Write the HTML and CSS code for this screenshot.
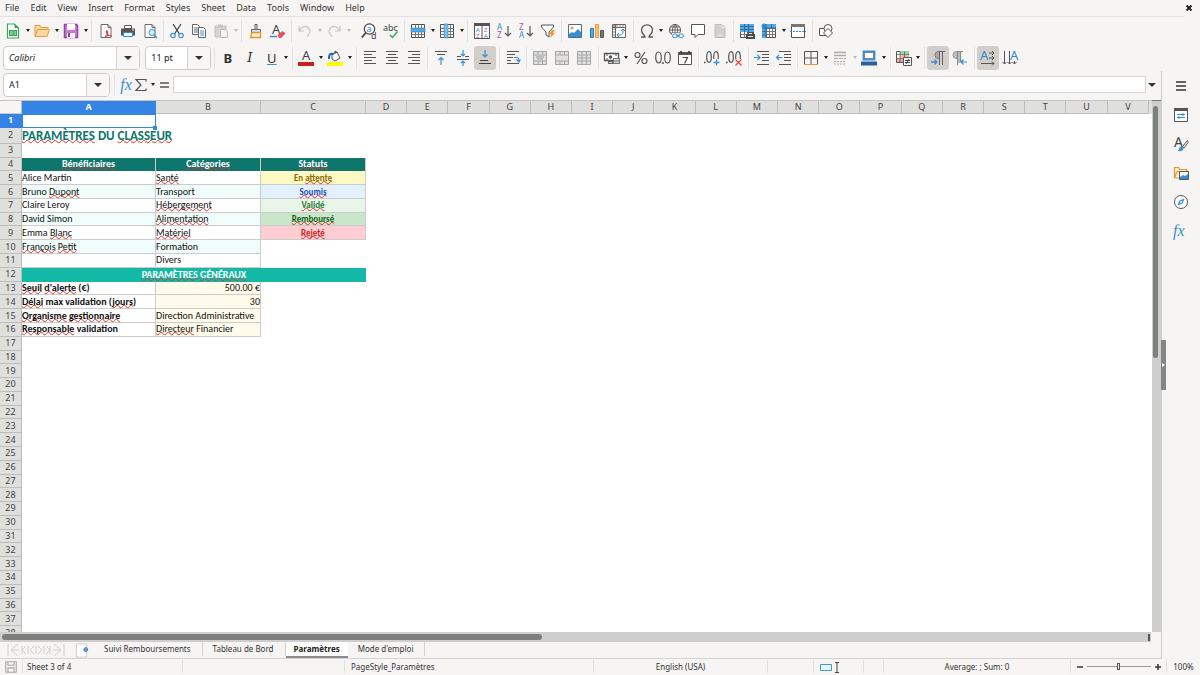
FILE: index.html
```html
<!DOCTYPE html>
<html lang="en">
<head>
<meta charset="utf-8">
<title>Paramètres</title>
<link rel="stylesheet" href="styles.css">
</head>
<body>
<svg class="defs" aria-hidden="true">
  <symbol id="page" viewBox="0 0 16 16"><path d="M3 1.5h7l3 3v10H3zM10 1.5v3h3" fill="#fafafa" stroke="#6b6b6b"/></symbol>
  <symbol id="grid" viewBox="0 0 16 16"><path d="M1.5 1.5h13v13h-13z" fill="#fff" stroke="#4d4d4d"/><path d="M1.5 5.5h13M1.5 8.5h13M1.5 11.5h13M5.5 1.5v13M8.5 1.5v13M11.5 1.5v13" stroke="#777" fill="none"/></symbol>
  <symbol id="merge" viewBox="0 0 16 16"><path d="M1.5 1.5h13v13h-13z" fill="#e0e0e0" stroke="#a6a6a6"/><path d="M1.5 5h13M1.5 11h13M6 1.5v3M10.5 1.5v3M6 11v3M10.5 11v3" stroke="#a6a6a6"/></symbol>
</svg>
<div class="app">
  <nav class="menubar">
    <button>File</button><button>Edit</button><button>View</button><button>Insert</button><button>Format</button><button>Styles</button><button>Sheet</button><button>Data</button><button>Tools</button><button>Window</button><button>Help</button>
    <button class="close" aria-label="Close document"><svg viewBox="0 0 8 8"><path d="M1.5 1.5l5 5M6.5 1.5l-5 5" stroke="#222" stroke-width="2"/></svg></button>
  </nav>

  <div class="toolbars">
  <div class="toolbar standard">
    <div class="group">
      <button aria-label="New"><svg viewBox="0 0 16 16"><path d="M2.5 1h7l4 4v10h-11z" fill="#fff" stroke="#38a458" stroke-width="1.2"/><path d="M9.5 1v4h4z" fill="#38a458"/><path d="M4 7h8v6H4z" fill="#38a458"/><path d="M5 9h3M9 9h2M5 11h3M9 11h2" stroke="#c9f0d3"/></svg></button><button class="drop" aria-label="New menu"></button>
      <button aria-label="Open"><svg viewBox="0 0 16 16"><path d="M1 13.5V2.5h5l1 2h7v2M1 13.5L3.5 6.5h12L13 13.5z" fill="#fbd9a0" stroke="#e8993c"/></svg></button><button class="drop" aria-label="Open menu"></button>
      <button aria-label="Save"><svg viewBox="0 0 16 16"><path d="M1.5 1.5h12l1 1v12h-13z" fill="#c77bd4" stroke="#9b3fae" stroke-width="1.5"/><path d="M4 1h8v6H4z" fill="#fff"/><path d="M4 10h8v5H4z" fill="#fafafa"/><path d="M5 10h2v4H5z" fill="#8d3a9e"/></svg></button><button class="drop" aria-label="Save menu"></button>
    </div><i class="sep"></i>
    <div class="group">
      <button aria-label="Export as PDF"><svg viewBox="0 0 16 16"><use href="#page"/><path d="M7 14c3-2 3-5 2-6s-1 3 1 4 4 1 4 1M7.500 14c1-2 4-2 6-1" fill="none" stroke="#e04050" stroke-width="1.2"/></svg></button>
      <button aria-label="Print"><svg viewBox="0 0 16 16"><path d="M4.500 2.500h7v3h-7z" fill="#fff" stroke="#555"/><path d="M1 5.500h14v7H1z" fill="#555"/><path d="M3.500 9.500h9v4h-9z" fill="#fff" stroke="#2f86d0"/><circle cx="13" cy="7" r=".8" fill="#fff"/></svg></button>
      <button aria-label="Print preview"><svg viewBox="0 0 16 16"><use href="#page"/><circle cx="10" cy="9.5" r="3" fill="#d9eefb" stroke="#4193d0"/><path d="M12 12l3 3" stroke="#4193d0" stroke-width="1.5"/></svg></button>
    </div><i class="sep"></i>
    <div class="group">
      <button aria-label="Cut"><svg viewBox="0 0 16 16"><path d="M4 1l6.500 10M12 1L5.500 11" stroke="#444" stroke-width="1.3"/><circle cx="4" cy="12.500" r="2.2" fill="none" stroke="#3a8fd4" stroke-width="1.2"/><circle cx="12" cy="12.500" r="2.2" fill="none" stroke="#3a8fd4" stroke-width="1.2"/></svg></button>
      <button aria-label="Copy"><svg viewBox="0 0 16 16"><path d="M1.5 1.5h5l2 2v8h-7z" fill="#fff" stroke="#666"/><path d="M3 5h4M3 7h4M3 9h4" stroke="#666"/><path d="M7.5 4.5h5l2 2v8h-7z" fill="#fff" stroke="#666"/><path d="M9 8h4M9 10h4M9 12h4" stroke="#3a8fd4"/></svg></button>
      <button aria-label="Paste" disabled><svg viewBox="0 0 16 16"><path d="M2 3h11v11H2z" fill="#d5d5d5" stroke="#c0c0c0"/><path d="M5 1.5h5v3H5z" fill="#c4c4c4"/><path d="M7.5 6.5h5l2 2v6h-7z" fill="#f3f3f3" stroke="#bbb"/></svg></button><button class="drop" aria-label="Paste menu" disabled></button>
    </div><i class="sep"></i>
    <div class="group">
      <button aria-label="Clone formatting"><svg viewBox="0 0 16 16"><path d="M7 1.5h2v5H7z" fill="#fff" stroke="#555"/><path d="M3.5 6.5h9v3h-9z" fill="#ddd" stroke="#666"/><path d="M4 9.5h8.500v5H2.500z" fill="#fff0d8" stroke="#e8912d" stroke-width="1.3"/></svg></button>
      <button aria-label="Clear formatting"><svg viewBox="0 0 16 16"><text x="2" y="11" class="g dark" font-size="13">A</text><path d="M0 13.5h7" stroke="#3a8fd4" stroke-width="1.5"/><path d="M7.5 12l5-4 3 2.5-4.500 4.500H9z" fill="#e8505b"/></svg></button>
    </div><i class="sep"></i>
    <div class="group">
      <button aria-label="Undo" disabled><svg viewBox="0 0 16 16"><path d="M2 3v5h5M2.5 7.5c2-4 6-5 8.500-3s3 5-1 9" fill="none" stroke="#c4c4c4" stroke-width="1.2"/></svg></button><button class="drop" aria-label="Undo menu" disabled></button>
      <button aria-label="Redo" disabled><svg viewBox="0 0 16 16"><path d="M14 3v5H9M13.5 7.5c-2-4-6-5-8.500-3s-3 5 1 9" fill="none" stroke="#c4c4c4" stroke-width="1.2"/></svg></button><button class="drop" aria-label="Redo menu" disabled></button>
    </div><i class="sep faint"></i>
    <div class="group">
      <button aria-label="Find and replace"><svg viewBox="0 0 16 16"><circle cx="8.500" cy="6" r="5.2" fill="#fff" stroke="#444" stroke-width="1.2"/><path d="M5 9.500L.8 14.500" stroke="#444" stroke-width="1.8"/><text x="5.500" y="9" class="g blue" font-size="9">a</text><text x="10" y="16" class="g dark" font-size="9">d</text></svg></button>
      <button aria-label="Spelling"><svg viewBox="0 0 16 16"><text x="0" y="8" class="g dark" font-size="9">abc</text><path d="M7 12l2.500 2.500L14.500 8.500" fill="none" stroke="#2fa866" stroke-width="1.5"/></svg></button>
    </div><i class="sep"></i>
    <div class="group">
      <button aria-label="Row"><svg viewBox="0 0 16 16"><use href="#grid"/><path d="M1 5h14v4H1z" fill="#54a9e4" stroke="#2f7fb8" stroke-width=".6"/></svg></button><button class="drop" aria-label="Row menu"></button>
      <button aria-label="Column"><svg viewBox="0 0 16 16"><use href="#grid"/><path d="M5 1h4v14H5z" fill="#7cbfec" stroke="#2f7fb8" stroke-width=".6"/></svg></button><button class="drop" aria-label="Column menu"></button>
    </div><i class="sep"></i>
    <div class="group">
      <button aria-label="Sort"><svg viewBox="0 0 16 16"><path d="M.5 .5h15v15H.5zM8 .5v15" fill="#fff" stroke="#555"/><path d="M0 0h16v3H0z" fill="#555"/><text x="2" y="9" class="g blue" font-size="6">A</text><text x="10" y="9" class="g purple" font-size="6">Z</text><text x="2" y="15" class="g purple" font-size="6">Z</text><text x="10" y="15" class="g blue" font-size="6">A</text></svg></button>
      <button aria-label="Sort ascending"><svg viewBox="0 0 16 16"><text x="1" y="7" class="g blue" font-size="8">A</text><text x="1" y="15" class="g purple" font-size="8">Z</text><path d="M12 3v10M9 10l3 3 3-3" fill="none" stroke="#555" stroke-width="1.2"/></svg></button>
      <button aria-label="Sort descending"><svg viewBox="0 0 16 16"><text x="1" y="7" class="g purple" font-size="8">Z</text><text x="1" y="15" class="g blue" font-size="8">A</text><path d="M12 3v10M9 10l3 3 3-3" fill="none" stroke="#555" stroke-width="1.2"/></svg></button>
      <button aria-label="AutoFilter"><svg viewBox="0 0 16 16"><path d="M1.5 2h12v2L9 9v5l-3-2V9L1.5 4z" fill="#fff" stroke="#555"/><path d="M12 7l-3 4h2l-1 4 5-5h-2l2-3z" fill="#f0953c"/></svg></button>
    </div><i class="sep"></i>
    <div class="group">
      <button aria-label="Image"><svg viewBox="0 0 16 16"><path d="M1.5 1.5h13v13h-13z" fill="#fff" stroke="#4d6f8c"/><circle cx="5" cy="5" r="1.600" fill="#f0a040"/><path d="M2 14v-3l3-2 2 1 4-4 3 3v5z" fill="#3a8fd4"/></svg></button>
      <button aria-label="Chart"><svg viewBox="0 0 16 16"><path d="M1.5 5.5h3v9h-3z" fill="#54a9e4" stroke="#2b7bbd"/><path d="M6.5 1.5h3v13h-3z" fill="#fbc67c" stroke="#e8993c"/><path d="M11.5 7.5h3v7h-3z" fill="#777" stroke="#555"/></svg></button>
      <button aria-label="Pivot table"><svg viewBox="0 0 16 16"><path d="M1.5 1.5h13v13h-13zM1.5 4.500h13M4.500 1.5v13" fill="#fff" stroke="#666"/><path d="M2 3h12M3 2v12" stroke="#888" stroke-dasharray="2 1"/><path d="M6 12h3c2 0 3-1 3-3V6M8 10l-2 2 2 2M10 8l2-2 2 2" fill="none" stroke="#3a8fd4"/></svg></button>
    </div><i class="sep"></i>
    <div class="group">
      <button aria-label="Special character"><svg viewBox="0 0 16 16"><path d="M2 14h4c0-2-3.500-3-3.500-7C2.500 4 5 1.800 8 1.800S13.500 4 13.500 7c0 4-3.500 5-3.500 7h4" fill="none" stroke="#555" stroke-width="1.3"/></svg></button><button class="drop" aria-label="Special character menu"></button>
      <button aria-label="Hyperlink"><svg viewBox="0 0 16 16"><circle cx="7" cy="7" r="5.500" fill="#fff" stroke="#555"/><path d="M1.5 7h11M2.500 4h9M2.500 10h9M7 1.5v11M7 1.5c-3.500 3-3.500 8 0 11M7 1.5c3.500 3 3.500 8 0 11" fill="none" stroke="#555" stroke-width=".9"/><path d="M4 10h12v6H4z" fill="#f6f5f4"/><rect x="4.500" y="11" width="5" height="3.500" rx="1.700" fill="none" stroke="#3a8fd4"/><rect x="10.500" y="11" width="5" height="3.500" rx="1.700" fill="none" stroke="#3a8fd4"/><path d="M8 12.800h4" stroke="#3a8fd4"/></svg></button>
      <button aria-label="Comment"><svg viewBox="0 0 16 16"><path d="M1.5 1.5h13v10H8l-3 3v-3H1.5z" fill="#fff" stroke="#555"/></svg></button>
      <button aria-label="Headers and footers" disabled><svg viewBox="0 0 16 16"><path d="M3 1.5h7l3 3v10H3z" fill="#d0d0d0" stroke="#bdbdbd"/><path d="M10 1.5v3h3M5 12h6" fill="none" stroke="#eee"/></svg></button>
    </div><i class="sep"></i>
    <div class="group">
      <button aria-label="Define print area"><svg viewBox="0 0 16 16"><use href="#grid"/><path d="M1 1h14v8H1z" fill="#54a9e4"/><path d="M1 3.500h14M1 6.500h14M5.500 1v8M9.500 1v8" stroke="#2a5f8c" stroke-width=".8"/><path d="M9 9h5v2h2v5H7v-5h2z" fill="#4d4d4d"/><path d="M10 10h3v1h-3zM9 13h5v1H9z" fill="#cfe8fa"/></svg></button>
      <button aria-label="Freeze rows and columns"><svg viewBox="0 0 16 16"><use href="#grid"/><path d="M1 1h14v4H1zM1 5h4v10H1z" fill="#54a9e4"/><path d="M1 5h14M5 1v14M1 8.500h4M1 12h4M10.500 1v4" stroke="#1f5f96" stroke-width=".8"/><path d="M3 0v6M0 3h6M1 1l4 4M5 1L1 5" stroke="#2680cc" stroke-width=".8"/></svg></button><button class="drop" aria-label="Freeze menu"></button>
      <button aria-label="Split window"><svg viewBox="0 0 16 16"><path d="M1.5 1.5h13v13h-13z" fill="#fff" stroke="#555"/><path d="M1 1h14v3H1z" fill="#777"/><path d="M0 8.500h16" stroke="#3a8fd4" stroke-dasharray="2 1"/></svg></button>
    </div><i class="sep"></i>
    <div class="group">
      <button aria-label="Show draw functions"><svg viewBox="0 0 16 16"><path d="M1.5 5.500h7v7h-7z" fill="#fff" stroke="#555"/><circle cx="10" cy="5.500" r="4" fill="#f8f8f8" stroke="#555"/><path d="M10 5.500l4.500 4.500-4.500 4.500L5.500 10z" fill="#fff" stroke="#555"/></svg></button>
    </div>
  </div>

  <div class="toolbar formatting">
    <div class="combo font"><input value="Calibri" aria-label="Font name"><button aria-label="Font list"></button></div>
    <div class="combo size"><input value="11 pt" aria-label="Font size"><button aria-label="Size list"></button></div><i class="sep"></i>
    <div class="group">
      <button class="glyph bold">B</button><button class="glyph italic">I</button><button class="glyph under">U</button><button class="drop" aria-label="Underline menu"></button>
    </div><i class="sep"></i>
    <div class="group">
      <button aria-label="Font color"><svg viewBox="0 0 16 16"><text x="4" y="10" class="g dark" font-size="13">A</text><path d="M0 12h16v4H0z" fill="#c9211e"/></svg></button><button class="drop" aria-label="Font color menu"></button>
      <button aria-label="Background color"><svg viewBox="0 0 16 16"><path d="M5 4l5-2 3 6-5 3-3-2z" fill="#fff" stroke="#555"/><path d="M2 9c0-5 1-6 5-5" fill="none" stroke="#2268a8" stroke-width="2"/><path d="M8 4V1l3 2" fill="none" stroke="#555"/><path d="M0 12h16v4H0z" fill="#ff0"/></svg></button><button class="drop" aria-label="Background color menu"></button>
    </div><i class="sep"></i>
    <div class="group">
      <button aria-label="Align left"><svg viewBox="0 0 16 16"><path d="M2 1.5h12M2 4.500h8M2 7.500h12M2 10.500h8M2 13.500h12" stroke="#555"/></svg></button>
      <button aria-label="Center horizontally"><svg viewBox="0 0 16 16"><path d="M2 1.5h12M4 4.500h8M2 7.500h12M4 10.500h8M2 13.500h12" stroke="#555"/></svg></button>
      <button aria-label="Align right"><svg viewBox="0 0 16 16"><path d="M2 1.5h12M6 4.500h8M2 7.500h12M6 10.500h8M2 13.500h12" stroke="#555"/></svg></button>
    </div><i class="sep"></i>
    <div class="group">
      <button aria-label="Align top"><svg viewBox="0 0 16 16"><path d="M2 1.5h12M4 4.500h8" stroke="#555"/><path d="M8 15V8M5.500 10L8 7.500l2.500 2.500" fill="none" stroke="#3a8fd4" stroke-width="1.2"/></svg></button>
      <button aria-label="Center vertically"><svg viewBox="0 0 16 16"><path d="M2 6.500h4M10 6.500h4M2 9.500h12" stroke="#555"/><path d="M8 0v6M6 4l2 2 2-2M8 16v-5M6 13l2-2 2 2" fill="none" stroke="#3a8fd4" stroke-width="1.2"/></svg></button>
      <button class="on" aria-label="Align bottom"><svg viewBox="0 0 16 16"><path d="M3 10.500h8M2 13.500h12" stroke="#444"/><path d="M8 0v7M5.500 4.500L8 7l2.500-2.500" fill="none" stroke="#3a8fd4" stroke-width="1.2"/></svg></button>
    </div><i class="sep"></i>
    <div class="group">
      <button aria-label="Wrap text"><svg viewBox="0 0 16 16"><path d="M2 1.5h12M2 4.500h8M2 7.500h6M2 10.500h4M2 13.500h12" stroke="#555"/><path d="M9 7.500h3c1.500 0 2 1 2 4M11.500 9.500l2.500 2.500 1.500-2.500" fill="none" stroke="#3a8fd4" stroke-width="1.2"/></svg></button>
    </div><i class="sep"></i>
    <div class="group">
      <button aria-label="Merge and center" disabled><svg viewBox="0 0 16 16"><use href="#merge"/><path d="M4 7h8M5 9h6" stroke="#999"/></svg></button>
      <button aria-label="Merge cells" disabled><svg viewBox="0 0 16 16"><use href="#merge"/></svg></button>
      <button aria-label="Unmerge cells" disabled><svg viewBox="0 0 16 16"><use href="#merge"/><path d="M6 5v6M10.500 5v6M1.5 8h13" stroke="#a6a6a6"/></svg></button>
    </div><i class="sep"></i>
    <div class="group">
      <button aria-label="Format as currency"><svg viewBox="0 0 16 16"><path d="M.5 3.500h14v7H.5z" fill="#fff" stroke="#555" stroke-width="1.3"/><circle cx="6.500" cy="7" r="1.800" fill="#555"/><path d="M2 5h2M11 5h2M2 9h2" stroke="#555"/><path d="M9 8h7v6H9z" fill="#777"/><path d="M4 11h5v3H4z" fill="#666"/><path d="M10 9.500h5M10 11h5M10 12.500h5M5 12.500h3" stroke="#fff" stroke-width=".7"/></svg></button><button class="drop" aria-label="Currency menu"></button>
      <button aria-label="Format as percent"><svg viewBox="0 0 16 16"><circle cx="4.500" cy="5" r="2.500" fill="none" stroke="#555" stroke-width="1.2"/><circle cx="11.500" cy="11" r="2.500" fill="none" stroke="#555" stroke-width="1.2"/><path d="M12 2L4 14" stroke="#555" stroke-width="1.2"/></svg></button>
      <button aria-label="Format as number"><svg viewBox="0 0 16 16"><ellipse cx="3.500" cy="7.500" rx="2.800" ry="5.500" fill="none" stroke="#555" stroke-width="1.2"/><ellipse cx="12.500" cy="7.500" rx="2.800" ry="5.500" fill="none" stroke="#555" stroke-width="1.2"/><path d="M8 12v2" stroke="#555" stroke-width="1.5" fill="none"/></svg></button>
      <button aria-label="Format as date"><svg viewBox="0 0 16 16"><path d="M1.5 2.500h13v12h-13z" fill="#fff" stroke="#555"/><path d="M1 2h14v3H1z" fill="#555"/><path d="M4 1v2M12 1v2" stroke="#333" stroke-width="1.5"/><path d="M5.500 7.500h5l-3 6" fill="none" stroke="#444" stroke-width="1.2"/></svg></button>
    </div><i class="sep"></i>
    <div class="group">
      <button aria-label="Add decimal place"><svg viewBox="0 0 16 16"><path d="M0 12.500h1.500" stroke="#444" stroke-width="1.5"/><ellipse cx="5" cy="7" rx="2.300" ry="5.300" fill="none" stroke="#555" stroke-width="1.2"/><ellipse cx="12" cy="7" rx="2.300" ry="5.300" fill="none" stroke="#555" stroke-width="1.2"/><path d="M9 9h7v7H9z" fill="#f6f5f4"/><path d="M12.500 9.500v6M9.500 12.500h6" stroke="#3a8fd4" stroke-width="1.3"/></svg></button>
      <button aria-label="Delete decimal place"><svg viewBox="0 0 16 16"><path d="M0 12.500h1.500" stroke="#444" stroke-width="1.5"/><ellipse cx="5" cy="7" rx="2.300" ry="5.300" fill="none" stroke="#555" stroke-width="1.2"/><ellipse cx="12" cy="7" rx="2.300" ry="5.300" fill="none" stroke="#555" stroke-width="1.2"/><path d="M9 9h7v7H9z" fill="#f6f5f4"/><path d="M9.500 9.500l6 6M15.500 9.500l-6 6" stroke="#e04545" stroke-width="1.2"/></svg></button>
    </div><i class="sep"></i>
    <div class="group">
      <button aria-label="Increase indent"><svg viewBox="0 0 16 16"><path d="M3 1.5h12M8 4.500h7M8 7.500h7M8 10.500h7M3 14.500h12" stroke="#555"/><path d="M0 7.500h6M3.500 5L6 7.500 3.500 10" fill="none" stroke="#3a8fd4" stroke-width="1.2"/></svg></button>
      <button aria-label="Decrease indent"><svg viewBox="0 0 16 16"><path d="M3 1.5h12M8 4.500h7M8 7.500h7M8 10.500h7M3 14.500h12" stroke="#555"/><path d="M6.500 7.500h-6M3 5L.5 7.500 3 10" fill="none" stroke="#3a8fd4" stroke-width="1.2"/></svg></button>
    </div><i class="sep"></i>
    <div class="group">
      <button aria-label="Borders"><svg viewBox="0 0 16 16"><path d="M1.5 14.500v-13h13v13M8 1.5v13M1.5 8h13" fill="none" stroke="#555"/><path d="M1 14.500h14" stroke="#f0953c"/></svg></button><button class="drop" aria-label="Borders menu"></button>
      <button aria-label="Border style" disabled><svg viewBox="0 0 16 16"><path d="M2 2.500h12M2 5.500h12" stroke="#aaa" stroke-width="1.5"/><path d="M2 8.500h12" stroke="#aaa" stroke-dasharray="4 1"/><path d="M2 11.500h12M2 14h12" stroke="#aaa" stroke-dasharray="2 1"/></svg></button><button class="drop" aria-label="Border style menu" disabled></button>
      <button aria-label="Border color"><svg viewBox="0 0 16 16"><path d="M2.500 1.5h11v8h-11z" fill="#fff" stroke="#3a8fd4" stroke-width="1.8"/><path d="M3.500 2.500h9v6h-9z" fill="none" stroke="#555" stroke-width=".6"/><path d="M0 11.500h16v4H0z" fill="#2a6099"/></svg></button><button class="drop" aria-label="Border color menu"></button>
    </div><i class="sep"></i>
    <div class="group">
      <button aria-label="Conditional formatting"><svg viewBox="0 0 16 16"><path d="M.5 1.5h12v11H.5z" fill="#fff" stroke="#555"/><path d="M4 1h9v3H4z" fill="#8fd6a0"/><path d="M4 5h9v3H4z" fill="#f6b9a0"/><path d="M1 9h7v3H1z" fill="#f0a0a4"/><path d="M.5 4.500h12M.5 8.500h12M4 1.5v11M8.500 1.5v11" stroke="#555" stroke-width=".7"/><path d="M7.500 7.500h8v8h-8z" fill="#fff" stroke="#555"/><path d="M9 10.500h5M9 12.500h5M13 9l-3 5" stroke="#444"/></svg></button><button class="drop" aria-label="Conditional menu"></button>
    </div><i class="sep"></i>
    <div class="group">
      <button class="on" aria-label="Left-to-right"><svg viewBox="0 0 16 16"><path d="M9.500 15V1.5M12.500 15V1.5M15 1.5H8.500a3.500 3.500 0 000 7h1" fill="none" stroke="#666"/><path d="M9 2h-.5a3 3 0 000 6H9z" fill="#aaa"/><path d="M1 12h6M4.500 9.500L7 12l-2.500 2.500" fill="none" stroke="#3a8fd4" stroke-width="1.3"/></svg></button>
      <button aria-label="Right-to-left"><svg viewBox="0 0 16 16"><path d="M5.500 15V1.5M8.500 12V1.5M11 1.5H4.500a3.500 3.500 0 000 7h1" fill="none" stroke="#888"/><path d="M5 2h-.5a3 3 0 000 6H5zM6 2h2v11H6z" fill="#bbb"/><path d="M15 12H9M11.500 9.500L9 12l2.500 2.500" fill="none" stroke="#3a8fd4" stroke-width="1.2"/></svg></button>
    </div><i class="sep"></i>
    <div class="group">
      <button class="on" aria-label="Text left to right"><svg viewBox="0 0 16 16"><text x="0" y="10" class="g blue" font-size="13">A</text><path d="M9 3h5M9 8h5M1 13.500h13M12 1l2 2-2 2M12 6l2 2-2 2M12 11.500l2 2-2 2" fill="none" stroke="#555"/></svg></button>
      <button aria-label="Text top to bottom"><svg viewBox="0 0 16 16"><text x="8" y="10" class="g blue" font-size="13">A</text><path d="M2.500 1v13M7.500 1v13M12.500 11v3M.5 12l2 2 2-2M5.500 12l2 2 2-2M10.500 12l2 2 2-2" fill="none" stroke="#555"/></svg></button>
    </div>
  </div>
  </div>

  <div class="body">
    <main class="work">
      <div class="formula">
        <div class="combo name"><input value="A1" aria-label="Name box"><button aria-label="Name list"></button></div><i class="sep"></i>
        <button class="fx" aria-label="Function wizard">fx</button>
        <button class="sigma" aria-label="Select function"><svg viewBox="0 0 16 16"><path d="M13 4.500v-2H3l5 5.500-5 5.500h10v-2" fill="none" stroke="#555" stroke-width="1.2"/></svg></button><button class="drop" aria-label="Function menu"></button>
        <button class="equals" aria-label="Formula"><svg viewBox="0 0 16 16"><path d="M4 6h9M4 10h9" stroke="#555" stroke-width="1.600"/></svg></button>
        <input class="line" aria-label="Input line">
        <button class="expand" aria-label="Expand formula bar"></button>
      </div>

      <div class="sheet">
        <div class="cells">
          <table>
            <colgroup><col class="c-num"><col class="c-a"><col class="c-b"><col class="c-b"><col span="19"></colgroup>
            <thead><tr><th></th><th class="sel">A</th><th>B</th><th>C</th><th>D</th><th>E</th><th>F</th><th>G</th><th>H</th><th>I</th><th>J</th><th>K</th><th>L</th><th>M</th><th>N</th><th>O</th><th>P</th><th>Q</th><th>R</th><th>S</th><th>T</th><th>U</th><th>V</th></tr></thead>
            <tbody>
              <tr><th class="sel">1</th><td class="cursor"></td><td colspan="21"></td></tr>
              <tr class="tall"><th>2</th><td class="title" colspan="22"><u>PARAMÈTRES</u> DU <u>CLASSEUR</u></td></tr>
              <tr><th>3</th><td colspan="22"></td></tr>
              <tr class="head"><th>4</th><td><u>Bénéficiaires</u></td><td><u>Catégories</u></td><td><u>Statuts</u></td><td class="none" colspan="19"></td></tr>
              <tr><th>5</th><td class="b">Alice Martin</td><td class="b"><u>Santé</u></td><td class="b st wait">En <u>attente</u></td><td colspan="19"></td></tr>
              <tr><th>6</th><td class="b mint">Bruno <u>Dupont</u></td><td class="b mint">Transport</td><td class="b st sent"><u>Soumis</u></td><td colspan="19"></td></tr>
              <tr><th>7</th><td class="b">Claire Leroy</td><td class="b"><u>Hébergement</u></td><td class="b st valid"><u>Validé</u></td><td colspan="19"></td></tr>
              <tr><th>8</th><td class="b mint">David Simon</td><td class="b mint"><u>Alimentation</u></td><td class="b st paid"><u>Remboursé</u></td><td colspan="19"></td></tr>
              <tr><th>9</th><td class="b">Emma <u>Blanc</u></td><td class="b"><u>Matériel</u></td><td class="b st refused"><u>Rejeté</u></td><td colspan="19"></td></tr>
              <tr><th>10</th><td class="b mint"><u>François</u> <u>Petit</u></td><td class="b mint">Formation</td><td colspan="20"></td></tr>
              <tr><th>11</th><td class="b"></td><td class="b">Divers</td><td colspan="20"></td></tr>
              <tr><th>12</th><td class="band" colspan="3"><u>PARAMÈTRES</u> <u>GÉNÉRAUX</u></td><td colspan="19"></td></tr>
              <tr><th>13</th><td class="b label"><u>Seuil</u> <u>d'alerte</u> (€)</td><td class="b cream num">500.00 €</td><td colspan="20"></td></tr>
              <tr><th>14</th><td class="b label"><u>Délai</u> max validation (<u>jours</u>)</td><td class="b cream num">30</td><td colspan="20"></td></tr>
              <tr><th>15</th><td class="b label"><u>Organisme</u> <u>gestionnaire</u></td><td class="b cream">Direction Administrative</td><td colspan="20"></td></tr>
              <tr><th>16</th><td class="b label"><u>Responsable</u> validation</td><td class="b cream"><u>Directeur</u> Financier</td><td colspan="20"></td></tr>
              <tr><th>17</th><td colspan="22"></td></tr>
              <tr><th>18</th><td colspan="22"></td></tr>
              <tr><th>19</th><td colspan="22"></td></tr>
              <tr><th>20</th><td colspan="22"></td></tr>
              <tr><th>21</th><td colspan="22"></td></tr>
              <tr><th>22</th><td colspan="22"></td></tr>
              <tr><th>23</th><td colspan="22"></td></tr>
              <tr><th>24</th><td colspan="22"></td></tr>
              <tr><th>25</th><td colspan="22"></td></tr>
              <tr><th>26</th><td colspan="22"></td></tr>
              <tr><th>27</th><td colspan="22"></td></tr>
              <tr><th>28</th><td colspan="22"></td></tr>
              <tr><th>29</th><td colspan="22"></td></tr>
              <tr><th>30</th><td colspan="22"></td></tr>
              <tr><th>31</th><td colspan="22"></td></tr>
              <tr><th>32</th><td colspan="22"></td></tr>
              <tr><th>33</th><td colspan="22"></td></tr>
              <tr><th>34</th><td colspan="22"></td></tr>
              <tr><th>35</th><td colspan="22"></td></tr>
              <tr><th>36</th><td colspan="22"></td></tr>
              <tr><th>37</th><td colspan="22"></td></tr>
              <tr><th>38</th><td colspan="22"></td></tr>
            </tbody>
          </table>
        </div>
        <div class="vscroll"><div class="thumb"></div></div>
      </div>
      <div class="hscroll"><div class="thumb"></div><i class="split"></i></div>

      <div class="tabs">
        <button class="nav" aria-label="Scroll tabs"><svg viewBox="0 0 60 14"><path d="M2 1v12M12 1L5 7l7 6M6 7h7M58 1v12M48 1l7 6-7 6M54 7h-7M20 3l-4 4 4 4M16 3v8M28 3l-4 4 4 4M32 3l4 4-4 4M40 3l4 4-4 4M22 3v8M30 3v8M38 3v8M44 3v8" fill="none" stroke="#cfcecc"/></svg></button>
        <button class="add" aria-label="Add sheet"><svg viewBox="0 0 14 16"><path d="M1 1h11v14H1z" fill="#fff" stroke="#ccc"/><circle cx="11" cy="7" r="2" fill="#fff" stroke="#2a64b8"/><path d="M11 5v4M9 7h4" stroke="#2a64b8" stroke-width=".7"/></svg></button>
        <button class="tab">Suivi Remboursements</button><button class="tab">Tableau de Bord</button><button class="tab active">Paramètres</button><button class="tab">Mode d'emploi</button>
      </div>
    </main>
    <aside class="sidebar">
      <button class="handle" aria-label="Hide sidebar"></button>
      <button aria-label="Sidebar settings"><svg viewBox="0 0 16 16"><path d="M3 4h10M3 8h10M3 12h10" stroke="#333" stroke-width="1.5"/></svg></button>
      <button aria-label="Properties"><svg viewBox="0 0 16 16"><path d="M1.5 1.5h13v13h-13z" fill="#fff" stroke="#555"/><path d="M1 1h14v3H1z" fill="#555"/><path d="M4 7.500h8M4 10.500h8M10 6v3M6 9v3" stroke="#3a8fd4"/></svg></button>
      <button aria-label="Styles"><svg viewBox="0 0 16 16"><text x="1" y="11" class="g dark" font-size="14">A</text><path d="M14.500 4.500l-5 6 1.500 1.500 4-5.500z" fill="#fff" stroke="#555"/><path d="M9 10.500c-2 0-3 1-3 3l-1.500 1.500c3 .5 6 0 6-3z" fill="#3a8fd4"/></svg></button>
      <button aria-label="Gallery"><svg viewBox="0 0 16 16"><path d="M1.5 13V2.500h4l1 2h7V7M1.5 13L4 6.500h3M1.5 13H6" fill="#fff0d8" stroke="#e8912d" stroke-width="1.2"/><path d="M6.500 6.500h9v8h-9z" fill="#fff" stroke="#555"/><path d="M7 14v-2l3-2 2 1 3-2v5z" fill="#3a8fd4"/></svg></button>
      <button aria-label="Navigator"><svg viewBox="0 0 16 16"><circle cx="8" cy="8" r="6.500" fill="#fff" stroke="#555"/><path d="M11.500 4.500L9.500 9.500 4.500 11.500 6.500 6.500z" fill="#3a8fd4"/><circle cx="8" cy="8" r="1" fill="#fff"/></svg></button>
      <button class="fx" aria-label="Functions">fx</button>
    </aside>
  </div>

  <footer class="status">
    <span class="s-save"><svg viewBox="0 0 16 16"><path d="M2 2h12v12H2zM4.500 2v4h7V2M4.500 14v-5h7v5" fill="none" stroke="#a5a5a5" stroke-width="1.2"/></svg></span>
    <span class="s-sheet">Sheet 3 of 4</span>
    <span class="s-gap"></span>
    <span class="s-style">PageStyle_Paramètres</span>
    <span class="s-lang">English (USA)</span>
    <span class="s-ins"></span>
    <span class="s-sel"><svg viewBox="0 0 22 14"><path d="M1.5 4.500h11v6h-11z" fill="#e9f6fd" stroke="#3f98cc"/><path d="M16 2.500h4M16 12.500h4M18 2v10" stroke="#444"/></svg></span>
    <span class="s-sig"></span>
    <span class="s-sum">Average: ; Sum: 0</span>
    <span class="s-zoom"><button aria-label="Zoom out"><svg viewBox="0 0 8 8"><path d="M1 4h6" stroke="#333" stroke-width="1.5"/></svg></button><input type="range" min="0" max="100" value="49" aria-label="Zoom"><button aria-label="Zoom in"><svg viewBox="0 0 8 8"><path d="M1 4h6M4 1v6" stroke="#333" stroke-width="1.5"/></svg></button></span>
    <span class="s-pct">100%</span>
  </footer>
</div>
</body>
</html>
```
FILE: styles.css
```css
* { box-sizing: border-box; }
html, body { height: 100%; }
body {
  margin: 0;
  background: #f6f5f4;
  color: #333;
  font: 9px/14px "Noto Sans", sans-serif;
  overflow: hidden;
}
button, input {
  margin: 0;
  padding: 0;
  border: 0;
  background: none;
  color: inherit;
  font: inherit;
}
svg { display: block; width: 16px; height: 16px; flex: none; overflow: visible; }
.defs { position: absolute; width: 0; height: 0; }
.g { font-family: "Noto Sans", sans-serif; }
.blue { fill: #2f86d0; }
.purple { fill: #a84fc0; }
.dark { fill: #444; }

.app { display: flex; flex-direction: column; height: 100%; }

.menubar {
  display: flex;
  align-items: center;
  gap: 11px;
  height: 16px;
  margin-right: 8px;
  padding-left: 5px;
  flex: none;
}
.menubar .close { margin-left: auto; margin-right: -1px; }
.close svg { width: 8px; height: 8px; }

.toolbars {
  display: flex;
  flex-direction: column;
  align-items: flex-start;
  flex: none;
  margin-right: 16px;
  border-top: 1px solid #e3e2e0;
}
.toolbar { display: flex; align-items: center; justify-content: space-between; height: 27px; }
.standard { width: 835px; margin-left: 2px; }
.formatting { width: 1018px; margin-left: 3px; }
.group { display: flex; }
.group button {
  display: flex;
  align-items: center;
  justify-content: center;
  width: 22px;
  height: 24px;
  border-radius: 3px;
}
.group .drop, .drop { width: 7px; height: 24px; display: flex; align-items: center; justify-content: center; }
.drop::before {
  content: "";
  border: 2px solid transparent;
  border-top: 3px solid #222;
  border-bottom: 0;
}
.drop:disabled::before { border-top-color: #bbb; }
.group .on { background: #d2cfcb; }
.sep { width: 1px; height: 22px; background: #e2e1df; flex: none; }
.faint { background: none; }
.group .glyph { font-size: 13px; }
.group .bold { font-weight: bold; }
.group .italic { font-family: "DejaVu Serif", serif; font-style: italic; }
.group .under { text-decoration: underline #3a8fd4; }

.combo {
  display: flex;
  height: 24px;
  border: 1px solid #cfccc8;
  border-radius: 4px;
  background: #fff;
  overflow: hidden;
}
.combo input { flex: 1; min-width: 0; padding-left: 5px; color: #222; }
.combo button { width: 23px; border-left: 1px solid #d5d2ce; background: #f8f7f6; }
.combo button, .expand { display: flex; align-items: center; justify-content: center; }
.combo button::before, .expand::before {
  content: "";
  border: 4px solid transparent;
  border-top: 4px solid #333;
  border-bottom: 0;
}
.font { width: 137px; }
.font input { font-style: italic; }
.size { width: 66px; margin-left: 3px; }
.name { width: 107px; }

.body { display: flex; flex: 1; min-height: 0; }
.work { display: flex; flex-direction: column; flex: 1; min-width: 0; }

.formula { display: flex; align-items: center; height: 29px; padding: 0 0 2px 3px; flex: none; }
.formula .sep { margin: 0 3px 0 4px; }
.fx { width: 16px; color: #3a8fd4; font: italic 16px/20px "Liberation Serif", serif; }
.formula .sigma { margin-left: -1px; }
.equals { margin-right: 1px; }
.line {
  flex: 1;
  min-width: 0;
  height: 17px;
  border: 1px solid #d8d6d3;
  background: #fff;
}
.expand { width: 12px; height: 17px; margin-right: 3px; }

.sheet { display: flex; flex: 1; min-height: 0; }
.cells {
  flex: 1;
  min-width: 0;
  overflow: hidden;
  border-top: 1px solid #c4c4c4;
  background: linear-gradient(#dfdfde, #dfdfde) 0 0 / 100% 13px no-repeat #fff;
}
table {
  width: calc(100% - 3px);
  height: calc(100% + 8px);
  table-layout: fixed;
  border-spacing: 0;
}
.c-num { width: 22px; }
.c-a { width: 134px; }
.c-b { width: 105px; }
th, td { padding: 0; line-height: 12px; white-space: nowrap; }
th {
  border-right: 1px solid #bdbdbd;
  border-bottom: 1px solid #bdbdbd;
  background: #dfdfde;
  color: #444;
  font-size: 9px;
  font-weight: normal;
}
thead th { height: 13px; }
thead th:first-child { background: #f6f5f4; border-bottom-color: #c8c8c8; }
th.sel { background: #3584e4; border-color: #3584e4; color: #fff; font-weight: bold; }
td { color: #111; font-family: Carlito, Lato, sans-serif; font-size: 10px; }
.tall { height: 16px; }
.b { border-right: 1px solid #ccc; border-bottom: 1px solid #ccc; }
.cursor { position: relative; box-shadow: inset 0 0 0 1px #3584e4; }
.cursor::after {
  content: "";
  position: absolute;
  right: -1px;
  bottom: -2px;
  width: 4px;
  height: 4px;
  background: #3584e4;
}
u { text-decoration: underline wavy #e0342c 1px; text-decoration-skip-ink: none; text-underline-offset: -1px; }
.title { color: #0f766e; font-size: 13px; font-weight: bold; line-height: 15px; }
.head td { border-right: 1px solid #ccc; background: #0f766e; color: #fff; font-weight: bold; text-align: center; }
.head .none { border: 0; background: none; }
.mint { background: #f0fdfa; }
.st { text-align: center; font-size: 9px; font-weight: bold; }
.wait { background: #fff9c4; color: #8a6d00; }
.sent { background: #e3f0fd; color: #1e50c0; }
.valid { background: #e8f5e9; color: #2e7d32; }
.paid { background: #c8e6c9; color: #1b5e20; }
.refused { background: #ffcdd2; color: #c62828; }
.band { background: #14b8a6; color: #fff; font-weight: bold; text-align: center; }
.label { font-weight: bold; }
.cream { background: #fffbeb; }
.num { text-align: right; }

.vscroll { width: 9px; padding: 5px 2px 0 1px; background: #cecece; border-top: 1px solid #777; flex: none; }
.vscroll .thumb { width: 5px; height: 48%; border-radius: 3px; background: #7d7f7d; }
.hscroll { display: flex; align-items: center; height: 10px; margin-right: 10px; padding-left: 2px; background: #cecece; flex: none; }
.hscroll .thumb { width: 47%; height: 6px; border-radius: 3px; background: #7d7f7d; }
.split { width: 2px; height: 7px; margin-left: auto; margin-right: 1px; background: #555; }

.tabs { display: flex; height: 17px; border-bottom: 1px solid #d5d3d0; padding-left: 5px; flex: none; }
.nav svg { width: 62px; height: 14px; }
.add { margin: 0 5px 0 8px; }
.add svg { width: 14px; height: 15px; }
.tab { align-self: flex-start; height: 14px; margin-left: 0; padding: 0 11px 0 10px; border-right: 1px solid #d5d3d0; font-size: 8px; line-height: 14px; }
.active { height: 16px; padding: 0 8px; border: 0; border-bottom: 2px solid #8a8a8a; background: #fff; color: #222; font-weight: bold; }

.sidebar {
  position: relative;
  display: flex;
  flex-direction: column;
  align-items: center;
  width: 39px;
  border-left: 1px solid #d0cecb;
  flex: none;
}
.sidebar button { display: flex; align-items: center; height: 29px; }
.sidebar .handle {
  position: absolute;
  left: -1px;
  top: calc(50% - 25px);
  justify-content: center;
  width: 5px;
  height: 50px;
  background: #858585;
}
.handle::before {
  content: "";
  border: 2px solid transparent;
  border-left: 3px solid #fff;
  border-right: 0;
}

.status { display: flex; height: 16px; line-height: 13px; font-size: 8px; flex: none; }
.status > span { display: flex; align-items: center; justify-content: center; height: 13px; margin-top: 1px; border-right: 1px solid #e0dfdd; }
.s-save { width: 23px; }
.s-save svg { width: 14px; height: 14px; }
.status .s-sheet { width: 160px; justify-content: flex-start; padding-left: 4px; }
.s-gap { width: 162px; }
.status .s-style { width: 249px; justify-content: flex-start; padding-left: 6px; }
.s-lang { width: 174px; }
.s-ins { width: 46px; }
.s-sel { width: 50px; }
.s-sel svg { width: 22px; height: 14px; margin-left: -18px; }
.s-sig { width: 20px; }
.s-sum { flex: 1; }
.s-zoom { width: 96px; gap: 3px; padding: 0 4px 0 5px; }
.s-zoom svg { width: 8px; height: 8px; }
.s-zoom input { flex: 1; min-width: 0; height: 13px; appearance: none; }
.s-zoom input::-webkit-slider-runnable-track { height: 1px; background: #999; }
.s-zoom input::-webkit-slider-thumb { appearance: none; width: 3px; height: 7px; margin-top: -3px; border: 1px solid #555; background: #eee; }
.status .s-pct { width: 33px; border: 0; }
```
